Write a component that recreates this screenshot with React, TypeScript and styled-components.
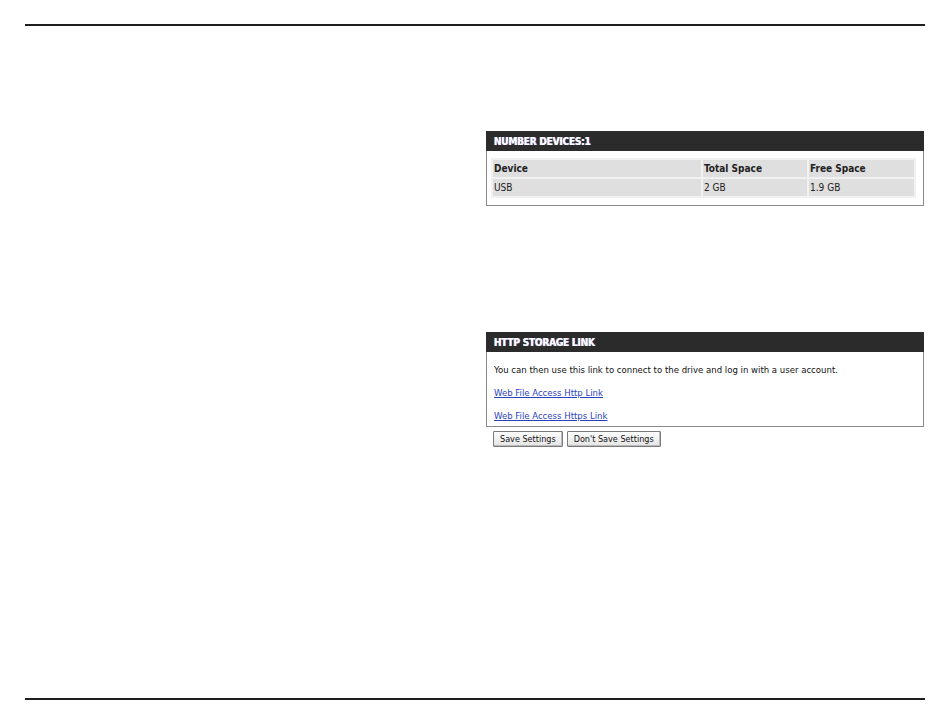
import React from "react";
import styled, { createGlobalStyle } from "styled-components";

const FONT = `"DejaVu Sans Condensed", "DejaVu Sans", "Liberation Sans", sans-serif`;

const Global = createGlobalStyle`
  html, body { margin: 0; padding: 0; background: #fff; }
  body { font-family: ${FONT}; font-stretch: condensed; }
`;

const Page = styled.div`
  width: 950px;
  height: 725px;
  box-sizing: border-box;
  padding: 24px 25px 0 25px;
  display: flex;
  flex-direction: column;
`;

const Rule = styled.div`
  height: 2px;
  background: #1e1e1e;
  width: 900px;
`;

const Body = styled.div`
  flex: 1;
  display: flex;
`;

const LeftCol = styled.div`
  width: 461px;
`;

const RightCol = styled.div`
  width: 438px;
  display: flex;
  flex-direction: column;
  padding-top: 105px;
`;

const Panel = styled.section<{ $gap?: number }>`
  border: 1px solid #8a8a8a;
  border-top: none;
  background: #fff;
  margin-top: ${(p) => p.$gap ?? 0}px;
`;

const PanelHead = styled.div`
  background: #2b2b2b;
  height: 20px;
  display: flex;
  align-items: center;
  padding-left: 8px;
  margin: 0 -1px;
  color: #fff;
  font-weight: bold;
  font-size: 10px;
  letter-spacing: -0.2px;
  text-shadow: 0.6px 0 0 #6a7cff, -0.6px 0 0 #d8b060;
`;

const TableWrap = styled.div`
  padding: 7px 7px 7px 4px;
`;

const Grid = styled.table`
  width: 100%;
  border-collapse: separate;
  border-spacing: 2px;
  background: #f1f1f1;
  font-size: 10px;
  color: #222;
`;

const Cell = styled.td<{ $bold?: boolean; $w?: number }>`
  background: #dfdfdf;
  height: 17px;
  padding: 0 1px;
  font-weight: ${(p) => (p.$bold ? "bold" : "normal")};
  width: ${(p) => (p.$w ? `${p.$w}px` : "auto")};
`;

const TextBlock = styled.div`
  padding: 12px 7px 4px 7px;
  font-size: 9.5px;
  color: #111;
  display: flex;
  flex-direction: column;
  gap: 11px;
`;

const Line = styled.div`
  line-height: 12px;
`;

const Link = styled.a`
  color: #2b3fbf;
  text-decoration: underline;
  line-height: 12px;
`;

const Buttons = styled.div`
  display: flex;
  gap: 4px;
  padding: 4px 0 0 7px;
`;

const Button = styled.button`
  font-family: ${FONT};
  font-stretch: condensed;
  font-size: 9px;
  height: 16px;
  padding: 0 6px;
  border: 1px solid #7a7a7a;
  background: linear-gradient(#fdfdfd, #e4e4e4);
  color: #111;
  border-radius: 1px;
  box-shadow: inset -1px -1px 0 #bcbcbc;
`;

export default function App() {
  return (
    <Page>
      <Global />
      <Rule />
      <Body>
        <LeftCol />
        <RightCol>
          <Panel>
            <PanelHead>NUMBER DEVICES:1</PanelHead>
            <TableWrap>
              <Grid>
                <tbody>
                  <tr>
                    <Cell $bold $w={206}>Device</Cell>
                    <Cell $bold $w={102}>Total Space</Cell>
                    <Cell $bold>Free Space</Cell>
                  </tr>
                  <tr>
                    <Cell>USB</Cell>
                    <Cell>2 GB</Cell>
                    <Cell>1.9 GB</Cell>
                  </tr>
                </tbody>
              </Grid>
            </TableWrap>
          </Panel>
          <Panel $gap={126}>
            <PanelHead>HTTP STORAGE LINK</PanelHead>
            <TextBlock>
              <Line>You can then use this link to connect to the drive and log in with a user account.</Line>
              <Link href="#">Web File Access Http Link</Link>
              <Link href="#">Web File Access Https Link</Link>
            </TextBlock>
          </Panel>
          <Buttons>
            <Button>Save Settings</Button>
            <Button>Don't Save Settings</Button>
          </Buttons>
        </RightCol>
      </Body>
      <Rule />
      <div style={{ height: 25 }} />
    </Page>
  );
}
